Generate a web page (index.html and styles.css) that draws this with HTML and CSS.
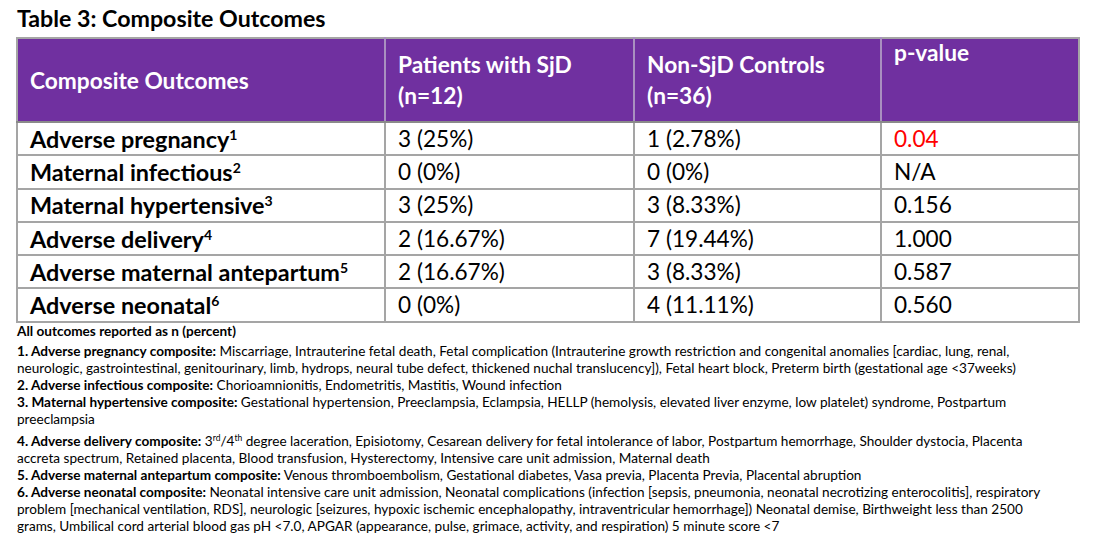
FILE: index.html
```html
<!DOCTYPE html>
<html lang="en">
<head>
<meta charset="utf-8">
<title>Table 3: Composite Outcomes</title>
<link rel="stylesheet" href="styles.css">
</head>
<body>
<div class="page">
  <h1 class="title">Table 3: Composite Outcomes</h1>
  <table class="outcomes">
    <colgroup>
      <col class="c1"><col class="c2"><col class="c3"><col class="c4">
    </colgroup>
    <thead>
      <tr>
        <th class="mid">Composite Outcomes</th>
        <th class="mid">Patients with SjD<br>(n=12)</th>
        <th class="mid">Non-SjD Controls<br>(n=36)</th>
        <th class="top">p-value</th>
      </tr>
    </thead>
    <tbody>
      <tr><td class="name">Adverse pregnancy<sup>1</sup></td><td>3 (25%)</td><td>1 (2.78%)</td><td class="sig">0.04</td></tr>
      <tr><td class="name">Maternal infectious<sup>2</sup></td><td>0 (0%)</td><td>0 (0%)</td><td>N/A</td></tr>
      <tr><td class="name">Maternal hypertensive<sup>3</sup></td><td>3 (25%)</td><td>3 (8.33%)</td><td>0.156</td></tr>
      <tr><td class="name">Adverse delivery<sup>4</sup></td><td>2 (16.67%)</td><td>7 (19.44%)</td><td>1.000</td></tr>
      <tr><td class="name">Adverse maternal antepartum<sup>5</sup></td><td>2 (16.67%)</td><td>3 (8.33%)</td><td>0.587</td></tr>
      <tr><td class="name">Adverse neonatal<sup>6</sup></td><td>0 (0%)</td><td>4 (11.11%)</td><td>0.560</td></tr>
    </tbody>
  </table>
  <div class="notes">
    <p class="note lead"><b>All outcomes reported as n (percent)</b></p>
    <p class="note"><b>1. Adverse pregnancy composite:</b> Miscarriage, Intrauterine fetal death, Fetal complication (Intrauterine growth restriction and congenital anomalies [cardiac, lung, renal,<br>neurologic, gastrointestinal, genitourinary, limb, hydrops, neural tube defect, thickened nuchal translucency]), Fetal heart block, Preterm birth (gestational age &lt;37weeks)</p>
    <p class="note"><b>2. Adverse infectious composite:</b> Chorioamnionitis, Endometritis, Mastitis, Wound infection</p>
    <p class="note"><b>3. Maternal hypertensive composite:</b> Gestational hypertension, Preeclampsia, Eclampsia, HELLP (hemolysis, elevated liver enzyme, low platelet) syndrome, Postpartum<br>preeclampsia</p>
    <p class="note raised"><b>4. Adverse delivery composite:</b> 3<sup>rd</sup>/4<sup>th</sup> degree laceration, Episiotomy, Cesarean delivery for fetal intolerance of labor, Postpartum hemorrhage, Shoulder dystocia, Placenta<br>accreta spectrum, Retained placenta, Blood transfusion, Hysterectomy, Intensive care unit admission, Maternal death</p>
    <p class="note"><b>5. Adverse maternal antepartum composite:</b> Venous thromboembolism, Gestational diabetes, Vasa previa, Placenta Previa, Placental abruption</p>
    <p class="note"><b>6. Adverse neonatal composite:</b> Neonatal intensive care unit admission, Neonatal complications (infection [sepsis, pneumonia, neonatal necrotizing enterocolitis], respiratory<br>problem [mechanical ventilation, RDS], neurologic [seizures, hypoxic ischemic encephalopathy, intraventricular hemorrhage]) Neonatal demise, Birthweight less than 2500<br>grams, Umbilical cord arterial blood gas pH &lt;7.0, APGAR (appearance, pulse, grimace, activity, and respiration) 5 minute score &lt;7</p>
  </div>
</div>
</body>
</html>
```
FILE: styles.css
```css
html, body {
  margin: 0;
  padding: 0;
  background: #ffffff;
}
body {
  font-family: Lato, "Open Sans", "Liberation Sans", sans-serif;
  color: #000000;
}
.page {
  padding: 5px 0 0 17px;
  width: 1062px;
}
.title {
  font-size: 23.2px;
  font-weight: 700;
  line-height: 27px;
  margin: 0 0 5px 0;
}
.outcomes {
  width: 1062px;
  border-collapse: collapse;
  table-layout: fixed;
  margin-left: -1px;
}
.c1 { width: 368px; }
.c2 { width: 249px; }
.c3 { width: 247px; }
.c4 { width: 198px; }
.outcomes th,
.outcomes td {
  border: 2px solid #a5a5a5;
  text-align: left;
  padding: 0 0 0 12px;
}
.outcomes th {
  background: #7030a0;
  color: #ffffff;
  font-size: 22.7px;
  font-weight: 700;
  line-height: 31px;
  height: 82px;
  border-color: #a5a5a5 #a98fc0 #8a8a8a #a98fc0;
}
.outcomes th:first-child { border-left-color: #a5a5a5; }
.outcomes th:last-child { border-right-color: #a5a5a5; }
.outcomes th.mid { vertical-align: middle; }
.outcomes th.top { vertical-align: top; line-height: 28px; }
.outcomes td {
  font-size: 22.6px;
  line-height: 26px;
  height: 31.3px;
  vertical-align: middle;
}
.outcomes td.name {
  font-size: 23.4px;
  font-weight: 700;
}
.outcomes td sup {
  font-size: 14px;
  line-height: 0;
  vertical-align: 8px;
}
.outcomes td.sig {
  color: #ff0000;
}
.notes {
  padding-top: 0;
}
.note {
  margin: 0;
  font-size: 13.6px;
  line-height: 17px;
  white-space: nowrap;
}
.note.lead {
  margin-bottom: 3px;
}
.note.raised {
  padding-top: 5px;
}
.note sup {
  font-size: 8.5px;
  line-height: 0;
  vertical-align: 5px;
}
```
